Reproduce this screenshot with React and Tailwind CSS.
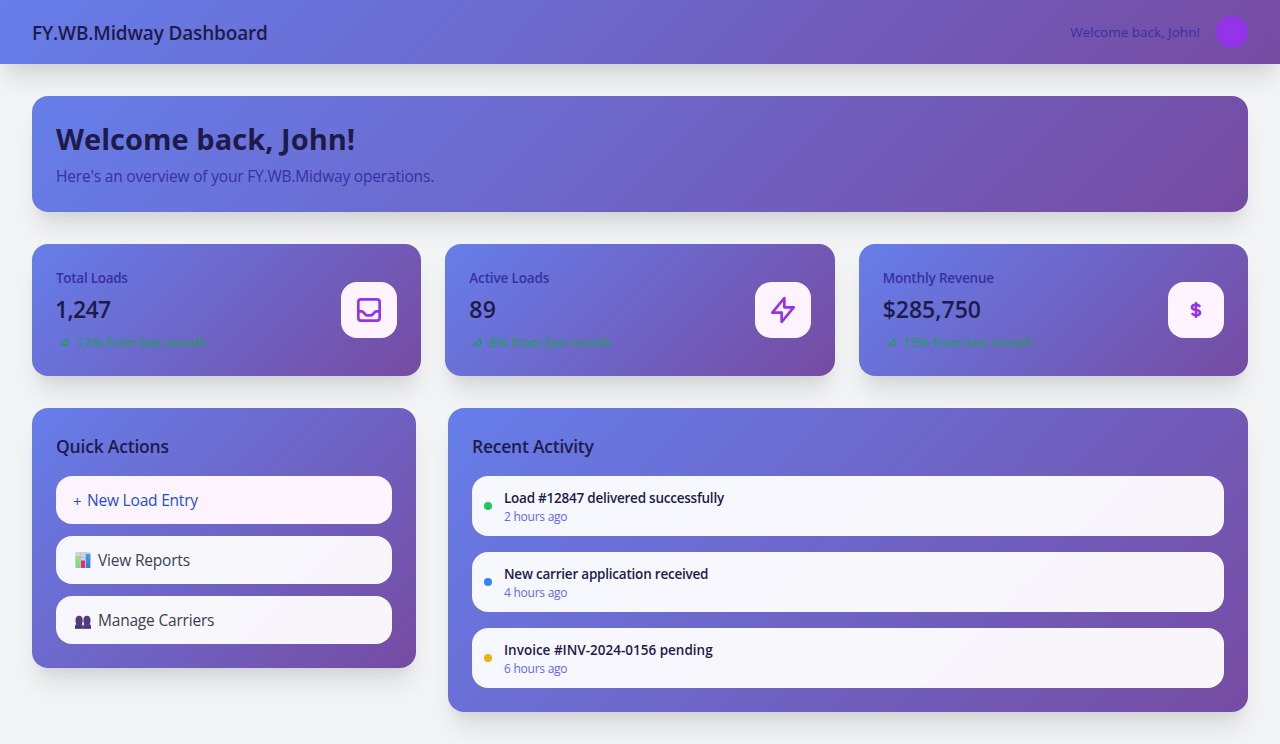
const GRAD = "bg-[linear-gradient(135deg,#667eea_0%,#764ba2_100%)]";
const SHADOW = "shadow-[0_20px_25px_-5px_rgba(0,0,0,0.1),0_10px_10px_-5px_rgba(0,0,0,0.04)]";

const stats = [
  {
    label: "Total Loads", labelCls: "tracking-[-0.28px]",
    value: "1,247", valueCls: "-ml-px tracking-[-0.7px]",
    change: "12% from last month", changeCls: "tracking-[-0.1px]",
    path: "M20 13V6a2 2 0 00-2-2H6a2 2 0 00-2 2v7m16 0v5a2 2 0 01-2 2H6a2 2 0 01-2-2v-5m16 0h-2.586a1 1 0 00-.707.293l-2.414 2.414a1 1 0 01-.707.293h-3.172a1 1 0 01-.707-.293l-2.414-2.414A1 1 0 006.586 13H4",
  },
  {
    label: "Active Loads", labelCls: "tracking-[-0.15px]",
    value: "89", valueCls: "tracking-[0.3px]",
    change: "8% from last month", changeCls: "tracking-[-0.1px]",
    path: "M13 10V3L4 14h7v7l9-11h-7z",
  },
  {
    label: "Monthly Revenue", labelCls: "tracking-[-0.18px]",
    value: "$285,750", valueCls: "tracking-[0px]",
    change: "15% from last month", changeCls: "tracking-[-0.1px]",
    path: "M12 8c-1.657 0-3 .895-3 2s1.343 2 3 2 3 .895 3 2-1.343 2-3 2m0-8c1.11 0 2.08.402 2.599 1M12 8V7m0 1v8m0 0v1m0-1c-1.11 0-2.08-.402-2.599-1",
  },
];

const activity = [
  { text: "Load #12847 delivered successfully", cls: "tracking-[-0.24px]", time: "2 hours ago", dot: "bg-[#22c55e]" },
  { text: "New carrier application received", cls: "tracking-[-0.22px]", time: "4 hours ago", dot: "bg-[#3b82f6]" },
  { text: "Invoice #INV-2024-0156 pending", cls: "tracking-[0px]", time: "6 hours ago", dot: "bg-[#eab308]" },
];

function ChartIcon() {
  return (
    <svg className="size-4" viewBox="0 0 16 16">
      <defs>
        <linearGradient id="barG" x1="0" y1="0" x2="0" y2="1"><stop offset="0" stopColor="#a6e35c" /><stop offset="1" stopColor="#5fe0a0" /></linearGradient>
        <linearGradient id="barB" x1="0" y1="0" x2="0" y2="1"><stop offset="0" stopColor="#2ea3f2" /><stop offset="1" stopColor="#3b7bd0" /></linearGradient>
      </defs>
      <rect width="16" height="16" rx="1.5" fill="#d5cfe0" />
      <path d="M5.5 0v16M10.5 0v16M0 5.5h16M0 10.5h16" stroke="#bdb4cc" strokeWidth=".7" />
      <rect x="1" y="4" width="4" height="12" fill="url(#barG)" />
      <rect x="6" y="8.5" width="4" height="7.5" fill="#e52f6f" />
      <rect x="11" y="2" width="4.2" height="14" fill="url(#barB)" />
    </svg>
  );
}

function PeopleIcon() {
  return (
    <svg className="mt-[3px] size-4" viewBox="0 0 16 16">
      <g fill="#533a7b">
        <path d="M0 14.500v-2.500c0-1 .6-1.500 1.500-1.800C.8 9.200.5 8 .5 6 .5 3.300 1.900 1.700 4.200 1.700S7.700 3.300 7.700 6c0 2-.3 3.200-1 4.200.8.3 1.200.8 1.200 1.800v2.500z" />
        <path d="M8.200 14.500V12c0-1 .4-1.500 1.200-1.800C8.700 9.200 8.400 8 8.400 6c0-2.700 1.200-4.300 3.500-4.300s3.600 1.600 3.600 4.300c0 2-.3 3.200-1 4.200 1 .3 1.500.8 1.500 1.800v2.500z" />
      </g>
      <path d="M0 13.500h16v1H0z" fill="#3b2163" />
    </svg>
  );
}

export default function App() {
  return (
    <div className="min-h-[744px] bg-gray-100 font-['Open_Sans',sans-serif]">
      <header className={`flex h-16 items-center justify-between px-8 ${GRAD} ${SHADOW}`}>
        <h1 className="pt-0.5 text-[19px] leading-7 font-semibold tracking-[-0.16px] text-[#1e1b4b]">FY.WB.Midway Dashboard</h1>
        <div className="flex items-center gap-4">
          <span className="text-[13.500px] leading-5 text-[#3730a3]">Welcome back, John!</span>
          <div className="size-8 rounded-full bg-[#9333ea]" />
        </div>
      </header>

      <main className="p-8">
        <section className={`mb-8 rounded-2xl p-6 ${GRAD} ${SHADOW}`}>
          <h2 className="mb-[7px] pt-px text-[29px] leading-9 font-bold tracking-[0.03px] text-[#1e1b4b]">Welcome back, John!</h2>
          <p className="text-[15.500px] leading-6 tracking-[-0.18px] text-[#3730a3]">Here's an overview of your FY.WB.Midway operations.</p>
        </section>

        <section className="mb-8 grid grid-cols-3 gap-6">
          {stats.map((s) => (
            <div key={s.label} className={`flex items-center justify-between rounded-2xl p-6 ${GRAD} ${SHADOW}`}>
              <div>
                <p className={`text-[13.500px] leading-5 font-semibold text-[#3730a3] ${s.labelCls}`}>{s.label}</p>
                <p className={`mt-[5px] text-[23px] leading-8 font-semibold text-[#1e1b4b] ${s.valueCls}`}>{s.value}</p>
                <p className="mt-[7px] flex h-5 items-center gap-[7px] pl-1 text-[13.500px] leading-5 text-[#16a34a]">
                  <svg className="h-3 w-[9px]" viewBox="0 0 9 12" fill="none" stroke="currentColor" strokeWidth="1.200"><path d="M1.200 9.400 7.700 3v6.400z" /></svg>
                  <span className={s.changeCls}>{s.change}</span>
                </p>
              </div>
              <div className="rounded-2xl bg-[#fdf4ff] p-3 text-[#9333ea]">
                <svg className="size-8" viewBox="0 0 24 24" fill="none" stroke="currentColor" strokeWidth="2" strokeLinecap="round" strokeLinejoin="round"><path d={s.path} /></svg>
              </div>
            </div>
          ))}
        </section>

        <section className="grid grid-cols-3 items-start gap-8">
          <div className={`rounded-2xl p-6 ${GRAD} ${SHADOW}`}>
            <h3 className="mb-4 text-[17.500px] leading-7 font-semibold tracking-[-0.2px] text-[#1e1b4b]">Quick Actions</h3>
            <div className="flex flex-col gap-3 text-[15.500px] leading-6">
              <button className="flex h-12 items-center gap-[6px] rounded-2xl bg-[#fdf4ff] px-[17px] text-[#1d4ed8]">
                <span className="w-2 pt-0.5 text-[15px]">+</span><span className="tracking-[-0.2px]">New Load Entry</span>
              </button>
              <button className="flex h-12 items-center gap-[7px] rounded-2xl bg-white/95 pl-[19px] text-[#374151]">
                <ChartIcon /><span className="tracking-[-0.2px]">View Reports</span>
              </button>
              <button className="flex h-12 items-center gap-[7px] rounded-2xl bg-white/95 pl-[19px] text-[#374151]">
                <PeopleIcon /><span className="tracking-[-0.2px]">Manage Carriers</span>
              </button>
            </div>
          </div>

          <div className={`col-span-2 rounded-2xl p-6 ${GRAD} ${SHADOW}`}>
            <h3 className="mb-4 text-[17.500px] leading-7 font-semibold tracking-[-0.24px] text-[#1e1b4b]">Recent Activity</h3>
            <div className="flex flex-col gap-4">
              {activity.map((a) => (
                <div key={a.text} className="flex h-[60px] items-center gap-3 rounded-2xl bg-white/95 p-3">
                  <span className={`size-2 rounded-full ${a.dot}`} />
                  <div>
                    <p className={`text-[13.500px] leading-5 font-semibold text-[#1e1b4b] ${a.cls}`}>{a.text}</p>
                    <p className="pt-px text-[12px] leading-[15px] tracking-[-0.25px] text-[#6366f1]">{a.time}</p>
                  </div>
                </div>
              ))}
            </div>
          </div>
        </section>
      </main>
    </div>
  );
}
